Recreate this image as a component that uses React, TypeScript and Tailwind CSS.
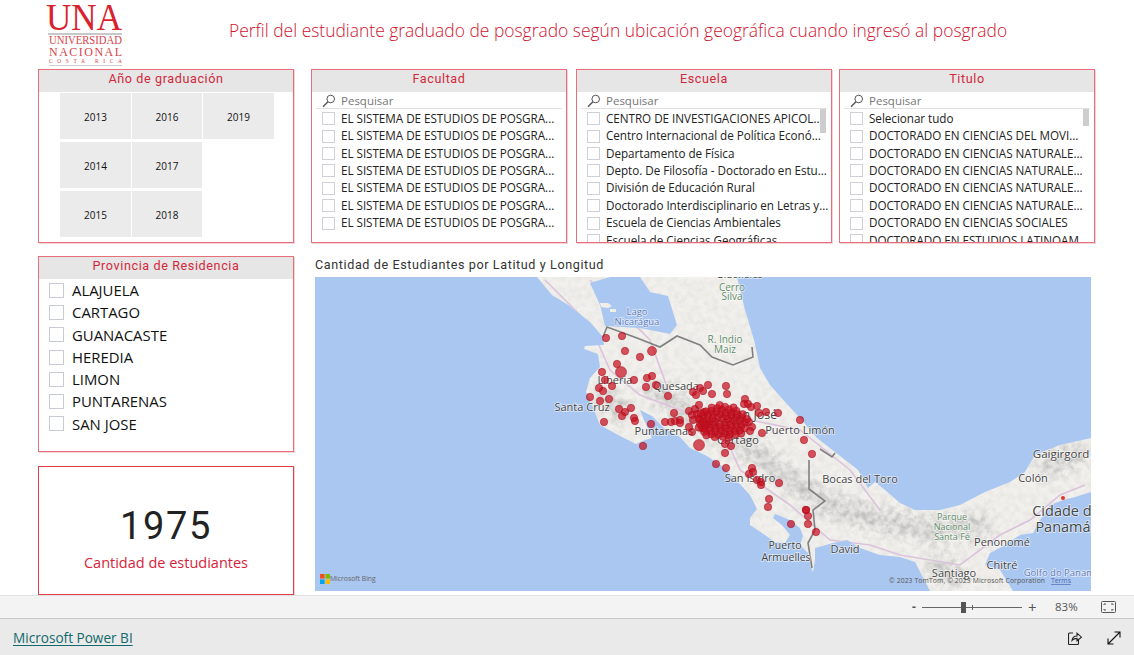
const din = "font-['Roboto',sans-serif]";

const facultades = Array(7).fill("EL SISTEMA DE ESTUDIOS DE POSGRA...");
const escuelas = [
  "CENTRO DE INVESTIGACIONES APICOL...",
  "Centro Internacional de Política Econó...",
  "Departamento de Física",
  "Depto. De Filosofía - Doctorado en Estu...",
  "División de Educación Rural",
  "Doctorado Interdisciplinario en Letras y...",
  "Escuela de Ciencias Ambientales",
  "Escuela de Ciencias Geográficas",
];
const titulos = [
  "Selecionar tudo",
  "DOCTORADO EN CIENCIAS DEL MOVI...",
  "DOCTORADO EN CIENCIAS NATURALE...",
  "DOCTORADO EN CIENCIAS NATURALE...",
  "DOCTORADO EN CIENCIAS NATURALE...",
  "DOCTORADO EN CIENCIAS NATURALE...",
  "DOCTORADO EN CIENCIAS SOCIALES",
  "DOCTORADO EN ESTUDIOS LATINOAM...",
];
const provincias = ["ALAJUELA", "CARTAGO", "GUANACASTE", "HEREDIA", "LIMON", "PUNTARENAS", "SAN JOSE"];
const years = ["2013", "2014", "2015", "2016", "2017", "2018", "2019"];

// dots read off the reference, in page pixels
const dots: [number, number, number?][] = [
  [606, 338], [622, 336], [625, 351], [640, 357], [652, 351, 4.5], [617, 364], [621, 372, 5.5], [602, 372], [605, 380],
  [634, 380], [647, 378], [652, 376], [646, 387], [612, 386], [599, 388], [603, 391], [656, 385], [590, 397], [600, 401],
  [609, 399], [668, 396], [693, 392], [700, 388], [703, 391], [708, 385], [696, 395], [712, 394], [726, 386], [727, 394],
  [619, 409], [631, 408], [625, 412], [622, 416], [604, 422], [634, 418], [635, 421], [651, 424], [643, 446], [665, 422],
  [671, 422], [675, 421], [680, 420], [680, 423], [674, 413], [745, 399], [744, 404], [748, 404], [751, 407], [757, 406],
  [759, 413], [766, 412], [778, 413], [800, 420], [804, 440], [812, 454], [749, 422], [752, 427], [750, 431], [762, 433],
  [699, 445, 5.5], [689, 427], [692, 432], [725, 453], [716, 464], [726, 468], [725, 444], [731, 446],
  [752, 468], [753, 472], [749, 474], [757, 480], [761, 482], [761, 485], [779, 483], [769, 499],
  [768, 507], [806, 510], [806, 510], [808, 516], [808, 524], [791, 524], [816, 532],
  [689, 411], [692, 415], [695, 409], [699, 405], [697, 414], [693, 420], [700, 420], [704, 412], [707, 424], [702, 428],
];
for (let i = 0; i < 72; i++) {
  const a = (i * 137.5 * Math.PI) / 180;
  const r = Math.sqrt((i + 1) / 72);
  dots.push([722 + Math.cos(a) * r * 26, 422 + Math.sin(a) * r * 17]);
}

const labels: [string, number, number, number, string][] = [
  ["Bluefields", 740, 278, 10, "#444"],
  ["Cerro", 732, 291, 10, "#5f8a68"],
  ["Silva", 732, 300, 10, "#5f8a68"],
  ["Lago", 637, 315, 9.5, "#5b78b4"],
  ["Nicarágua", 637, 325, 9.5, "#5b78b4"],
  ["R. Indio", 725, 343, 10, "#5f8a68"],
  ["Maiz", 725, 353, 10, "#5f8a68"],
  ["Liberia", 615, 384, 11, "#444"],
  ["Quesada", 676, 390, 11, "#444"],
  ["Santa Cruz", 582, 411, 11, "#444"],
  ["San José", 753, 419, 12.5, "#444"],
  ["Puntarenas", 664, 435, 11, "#444"],
  ["Puerto Limón", 800, 434, 11, "#444"],
  ["Cartago", 738, 444, 11.5, "#444"],
  ["San Isidro", 750, 482, 11, "#444"],
  ["Bocas del Toro", 860, 483, 11, "#444"],
  ["Gaigirgord", 1061, 458, 11.5, "#444"],
  ["Colón", 1033, 482, 11, "#444"],
  ["Cidade de", 1066, 516, 14.5, "#444"],
  ["Panamá", 1063, 532, 14.5, "#444"],
  ["Parque", 952, 520, 9, "#5f8a68"],
  ["Nacional", 952, 530, 9, "#5f8a68"],
  ["Santa Fé", 952, 540, 9, "#5f8a68"],
  ["Penonomé", 1002, 546, 11, "#444"],
  ["David", 845, 553, 11, "#444"],
  ["Puerto", 785, 549, 10.5, "#444"],
  ["Armuelles", 786, 561, 10.5, "#444"],
  ["Chitré", 1002, 569, 11, "#444"],
  ["Santiago", 954, 577, 11, "#444"],
  ["Golfo do Panamá", 1062, 576, 9.5, "#5b78b4"],
];

const land =
  "M537 277 L552 295 L570 306 L590 322 L603 337 L604 345 L585 346 L584 349 L598 354 L600 367 L590 378 L586 392 L592 405 L600 425 L620 436 L636 444 L645 440 L652 438 L644 420 L640 410 L652 416 L664 428 L680 437 L690 448 L707 456 L722 466 L738 482 L750 495 L757 509 L750 518 L750 525 L762 533 L775 542 L785 543 L790 535 L782 525 L773 518 L775 514 L790 520 L800 528 L803 536 L800 545 L808 553 L811 568 L813 572 L815 560 L815 548 L833 543 L847 540 L860 548 L880 555 L900 557 L915 562 L930 591 L1013 591 L1000 570 L985 565 L990 553 L1005 545 L1020 535 L1033 533 L1040 520 L1050 505 L1063 500 L1075 497 L1091 492 L1091 438 L1060 445 L1035 455 L1025 472 L1010 482 L985 492 L960 505 L940 510 L915 510 L900 503 L885 490 L875 482 L868 488 L858 470 L835 452 L817 438 L800 418 L785 402 L770 385 L760 368 L754 340 L745 310 L737 277 Z";
const lake = "M590 283 L610 277 L640 277 L650 292 L668 296 L677 325 L670 334 L640 328 L605 326 L600 305 Z";
const spine =
  "M600 395 L625 415 M650 385 L690 415 L745 445 L790 480 L830 505 L880 520 L930 530 L990 525 M1040 470 L1085 450 M930 560 L960 580";

function SearchIcon() {
  return (
    <svg width="14" height="14" viewBox="0 0 14 14" fill="none" stroke="#555" strokeWidth="1">
      <circle cx="8.7" cy="5" r="3.8" />
      <path d="M5.9 7.8 1 12.7" strokeWidth="1.4" />
    </svg>
  );
}

function PanelHead({ title }: { title: string }) {
  return (
    <div className={`flex h-[22px] shrink-0 items-center justify-center bg-[#e6e6e6] pb-[3px] text-[12.6px] tracking-[0.6px] text-[#d3283c] ${din}`}>
      {title}
    </div>
  );
}

function Slicer({ title, items, thumb }: { title: string; items: string[]; thumb?: number }) {
  return (
    <section className="flex h-[174px] w-[256px] shrink-0 flex-col border border-[#e66f79] bg-white shadow-[1px_1px_0_#f4d3d6]">
      <PanelHead title={title} />
      <div className="mx-[4px] flex h-[17px] items-center gap-[5px] border-b border-[#e1e1e1] pl-[6px] pt-[2px] text-[11.5px] text-[#777]">
        <SearchIcon />
        <span>Pesquisar</span>
      </div>
      <div className="relative flex-1 overflow-hidden pl-[10px] pt-px">
        {thumb && <div className="absolute right-[5px] top-0 w-[6px] bg-[#cdcdcd]" style={{ height: thumb }} />}
        {items.map((item, i) => (
          <div key={i} className="flex h-[17.4px] items-center gap-[6px] whitespace-nowrap text-[11.7px] tracking-[-0.04px] text-[#222]">
            <span className="h-[13px] w-[13px] shrink-0 border border-[#cfd0d6] bg-white" />
            <span>{item}</span>
          </div>
        ))}
      </div>
    </section>
  );
}

function UnaLogo() {
  return (
    <svg width="80" height="64" viewBox="0 0 80 64" className="font-['Liberation_Serif',serif]">
      <text x="1" y="27" fontSize="37" fill="#d8232f" textLength="76" lengthAdjust="spacingAndGlyphs">UNA</text>
      <rect x="3" y="30" width="74" height="2" fill="#c8c8c8" />
      <text x="4" y="41" fontSize="12" fill="#d8434c" textLength="73" lengthAdjust="spacingAndGlyphs">UNIVERSIDAD</text>
      <text x="4" y="53" fontSize="12" fill="#d8434c" textLength="73">NACIONAL</text>
      <text x="4" y="60" fontSize="5.5" fill="#d8434c" textLength="73">COSTA RICA</text>
      <rect x="4" y="62" width="73" height="1" fill="#cccccc" />
    </svg>
  );
}

function CostaRicaMap() {
  return (
    <svg width="776" height="314" viewBox="315 277 776 314" className="block font-['Open_Sans',sans-serif]">
      <defs>
        <clipPath id="landClip">
          <path d={land} />
        </clipPath>
        <filter id="relief" x="0" y="0" width="100%" height="100%">
          <feTurbulence type="fractalNoise" baseFrequency="0.16" numOctaves="3" seed="7" />
          <feColorMatrix values="0 0 0 0 0.42  0 0 0 0 0.42  0 0 0 0 0.42  2 0 0 0 -0.75" />
        </filter>
        <filter id="soft" x="-10%" y="-30%" width="120%" height="160%">
          <feGaussianBlur stdDeviation="6" />
        </filter>
        <mask id="spineMask" maskUnits="userSpaceOnUse" x="315" y="277" width="776" height="314">
          <path d={spine} fill="none" stroke="#ffffff" strokeWidth="26" filter="url(#soft)" />
        </mask>
      </defs>
      <rect x="315" y="277" width="776" height="314" fill="#aac7f1" />
      <path d={land} fill="#f1f0ec" />
      <g clipPath="url(#landClip)">
        <rect x="315" y="277" width="776" height="314" filter="url(#relief)" opacity="0.16" />
        <g mask="url(#spineMask)">
          <rect x="315" y="277" width="776" height="314" filter="url(#relief)" opacity="0.75" />
        </g>
        <path d={spine} fill="none" stroke="#b5b5b5" strokeWidth="10" opacity="0.4" filter="url(#soft)" />
        <path
          d="M545 280 L590 325 L610 370 L640 395 L680 410 L720 425 L740 470 L790 505 L830 540 L870 545 L900 555 L960 565 L1000 535 L1030 520 L1060 495 L1085 485 M700 410 L800 430 L850 470 L880 510 M590 280 L650 340 L670 395"
          fill="none"
          stroke="#dcc3dd"
          strokeWidth="1.6"
        />
      </g>
      <path d={lake} fill="#aac7f1" />
      <path d="M600 303h8l4 3-4 2-7-1z M610 309h6v3h-6z" fill="#efeee8" />
      <path
        d="M603 337 L607 327 L637 338 L660 347 L677 336 L700 345 L712 357 L733 365 L753 357 L752 347 M820 449 L832 457 L835 453 M809 460 L809 489 L825 501 L813 510 L815 530 L808 543 L812 568"
        fill="none"
        stroke="#808080"
        strokeWidth="1.6"
      />
      <circle cx="1063" cy="498" r="2" fill="#e0352b" />
      {labels.map(([t, x, y, s, c]) => (
        <text key={t + x} x={x} y={y} fontSize={s} fill={c} textAnchor="middle" stroke="#ffffff" strokeOpacity="0.65" strokeWidth="1.5" paintOrder="stroke">
          {t}
        </text>
      ))}
      {dots.map(([x, y, r], i) => (
        <circle key={i} cx={x} cy={y} r={r ?? 3.7} fill="#c80d1e" fillOpacity="0.7" stroke="#a80f1d" strokeOpacity="0.75" strokeWidth="0.7" />
      ))}
      <rect x="320" y="574" width="4.6" height="4.6" fill="#f25022" />
      <rect x="325.4" y="574" width="4.6" height="4.6" fill="#7fba00" />
      <rect x="320" y="579.4" width="4.6" height="4.6" fill="#00a4ef" />
      <rect x="325.4" y="579.4" width="4.6" height="4.6" fill="#ffb900" />
      <text x="330" y="581" fontSize="6.8" fill="#666">Microsoft Bing</text>
      <text x="889" y="583" fontSize="6.8" fill="#555" textLength="156">© 2023 TomTom, © 2023 Microsoft Corporation</text>
      <text x="1051" y="583" fontSize="6.8" fill="#4a68b0" textDecoration="underline">Terms</text>
    </svg>
  );
}

export default function App() {
  return (
    <div className="flex h-[655px] w-[1134px] flex-col overflow-hidden bg-white font-['Open_Sans',sans-serif]">
      <main className="h-[595px] shrink-0 pl-[38px]">
        <header className="flex h-[69px] items-start">
          <div className="ml-[7px] mt-[3px] w-[184px] shrink-0">
            <UnaLogo />
          </div>
          <h1 className="mt-[19px] whitespace-nowrap text-[17.45px] font-light leading-[22px] text-[#d0142e]">
            Perfil del estudiante graduado de posgrado según ubicación geográfica cuando ingresó al posgrado
          </h1>
        </header>

        <div className="flex">
          <section className="mr-[17px] flex h-[174px] w-[256px] flex-col border border-[#e66f79] bg-white shadow-[1px_1px_0_#f4d3d6]">
            <PanelHead title="Año de graduación" />
            <div className="ml-[21px] mt-[1px] grid grid-flow-col grid-cols-[71px_70px_71px] grid-rows-[46px_46px_46px] gap-x-px gap-y-[3px]">
              {years.map((y) => (
                <div key={y} className="flex items-center justify-center bg-[#ebebeb] pt-[2px] text-[10px] text-[#111]">
                  {y}
                </div>
              ))}
            </div>
          </section>
          <div className="flex gap-[9px]">
            <Slicer title="Facultad" items={facultades} />
            <Slicer title="Escuela" items={escuelas} thumb={24} />
            <div className="-ml-[2px]">
              <Slicer title="Titulo" items={titulos} thumb={17} />
            </div>
          </div>
        </div>

        <div className="mt-[13px] flex">
          <div className="flex w-[256px] shrink-0 flex-col gap-[14px]">
            <section className="h-[196px] border border-[#e66f79] bg-white shadow-[1px_1px_0_#f4d3d6]">
              <PanelHead title="Provincia de Residencia" />
              <div className="pl-[10px]">
                {provincias.map((p) => (
                  <div key={p} className="flex h-[22.3px] items-center gap-[8px] text-[14.9px] text-[#111]">
                    <span className="h-[15px] w-[15px] border border-[#c9cbd3]" />
                    {p}
                  </div>
                ))}
              </div>
            </section>
            <section className="flex h-[129px] flex-col items-center border border-[#e23c46] bg-white shadow-[1px_1px_0_#f4d3d6]">
              <div className={`mt-[37px] text-[38px] leading-[44px] tracking-[1.6px] text-[#222] ${din}`}>1975</div>
              <div className="mt-[5px] text-[14.5px] leading-[20px] text-[#d7233a]">Cantidad de estudiantes</div>
            </section>
          </div>
          <div className="ml-[21px]">
            <h2 className={`flex h-[21px] items-center pb-[2px] text-[12.6px] tracking-[0.6px] text-[#333] ${din}`}>
              Cantidad de Estudiantes por Latitud y Longitud
            </h2>
            <CostaRicaMap />
          </div>
        </div>
      </main>

      <div className="flex h-[24px] shrink-0 items-center border-y border-t-[#e2e2e2] border-b-[#c8c8c8] bg-[#f3f3f3] pl-[912px] text-[#555]">
        <span className="w-[10px] text-[12px] font-bold leading-none">-</span>
        <div className="relative h-px w-[100px] bg-[#666]">
          <div className="absolute left-[39px] top-[-5px] h-[11px] w-[5px] bg-[#555]" />
          <div className="absolute left-[50px] top-[-2px] h-[5px] w-px bg-[#666]" />
        </div>
        <span className="ml-[6px] w-[27px] text-[15px] leading-none">+</span>
        <span className="w-[46px] text-[11.5px]">83%</span>
        <svg width="15" height="12" viewBox="0 0 15 12" fill="none" stroke="#555" strokeWidth="1">
          <rect x="0.5" y="0.5" width="14" height="11" rx="1" />
          <path d="M3 4V3h2M10 3h2v1M12 8v1h-2M5 9H3V8" />
        </svg>
      </div>

      <footer className="flex flex-1 items-center justify-between bg-[#eaeaea] pl-[13px] pr-[13px] pt-[2px]">
        <a className="text-[13.6px] font-medium text-[#11696b] underline underline-offset-2">Microsoft Power BI</a>
        <div className="flex items-center gap-[25px]">
          <svg width="14" height="14" viewBox="0 0 14 14" fill="none" stroke="#222" strokeWidth="1.1">
            <path d="M5 2H1.5a1 1 0 0 0-1 1v9.5a1 1 0 0 0 1 1h8a1 1 0 0 0 1-1V9" />
            <path d="M4 9.5C4.4 6.6 6.3 5 9 5V2.2l4.5 4L9 9.8V7.4c-2 0-3.6.5-5 2.1Z" />
          </svg>
          <svg width="14" height="14" viewBox="0 0 14 14" fill="none" stroke="#111" strokeWidth="1.1">
            <path d="M1 13 13 1M7.5 1H13v5.5M1 7.5V13h5.5" />
          </svg>
        </div>
      </footer>
    </div>
  );
}
